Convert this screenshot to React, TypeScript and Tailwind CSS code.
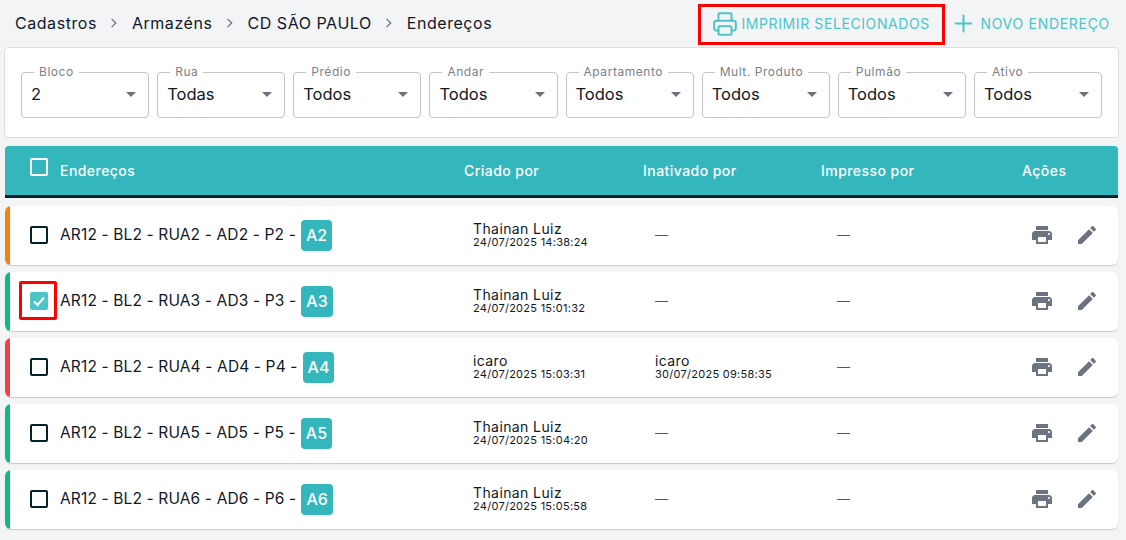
import { Plus, Printer } from "lucide-react";

const filters = [
  { label: "Bloco", value: "2" },
  { label: "Rua", value: "Todas" },
  { label: "Prédio", value: "Todos" },
  { label: "Andar", value: "Todos" },
  { label: "Apartamento", value: "Todos" },
  { label: "Mult. Produto", value: "Todos" },
  { label: "Pulmão", value: "Todos" },
  { label: "Ativo", value: "Todos" },
];

const rows = [
  { name: "AR12 - BL2 - RUA2 - AD2 - P2 -", tag: "A2", bar: "bg-[#f58207]", by: "Thainan Luiz", at: "24/07/2025 14:38:24" },
  { name: "AR12 - BL2 - RUA3 - AD3 - P3 -", tag: "A3", bar: "bg-[#10b981]", by: "Thainan Luiz", at: "24/07/2025 15:01:32", checked: true },
  { name: "AR12 - BL2 - RUA4 - AD4 - P4 -", tag: "A4", bar: "bg-[#ef4444]", by: "icaro", at: "24/07/2025 15:03:31", offBy: "icaro", offAt: "30/07/2025 09:58:35" },
  { name: "AR12 - BL2 - RUA5 - AD5 - P5 -", tag: "A5", bar: "bg-[#10b981]", by: "Thainan Luiz", at: "24/07/2025 15:04:20" },
  { name: "AR12 - BL2 - RUA6 - AD6 - P6 -", tag: "A6", bar: "bg-[#10b981]", by: "Thainan Luiz", at: "24/07/2025 15:05:58" },
];

const Crumb = () => (
  <svg width="24" height="24" viewBox="0 0 24 24" className="mx-[5.5px] fill-[#6b7280]">
    <path d="M10 7.4 9.1 8.3l3.7 3.7-3.7 3.7.9.9 4.6-4.6z" />
  </svg>
);

const Person = ({ name, at }: { name: string; at: string }) => (
  <div className="flex flex-col text-[#111827]">
    <span className="text-[14px] leading-[14px] tracking-[0.4px]">{name}</span>
    <span className="text-[11px] leading-[12px] tracking-[0.27px]">{at}</span>
  </div>
);

const Dash = () => <span className="-mt-[1px] block text-[13px] leading-[16px] text-[#4b5563]">—</span>;

export default function App() {
  return (
    <div className="h-[540px] w-[1126px] overflow-hidden bg-[#f3f4f6] font-['Inter',sans-serif] text-[#111827]">
      <div className="flex h-[47px] items-center pr-[16px] pl-[15px]">
        <nav className="flex items-center pb-[1px] text-[16px] tracking-[0.55px]">
          <span>Cadastros</span>
          <Crumb />
          <span>Armazéns</span>
          <Crumb />
          <span>CD SÃO PAULO</span>
          <Crumb />
          <span>Endereços</span>
        </nav>
        <div className="mt-[1px] ml-auto flex items-center gap-[5px] text-[14px] text-[#4cc4c8]">
          <button className="flex h-[41px] w-[247px] items-center gap-[3px] border-[3px] border-[#ff0000] pb-[1px] pl-[11px]">
            <Printer size={26} strokeWidth={1.8} />
            <span className="tracking-[0.6px]">IMPRIMIR SELECIONADOS</span>
          </button>
          <button className="flex h-[41px] items-center gap-[3px] pb-[1px]">
            <Plus size={27} strokeWidth={1.8} />
            <span className="tracking-[0.7px]">NOVO ENDEREÇO</span>
          </button>
        </div>
      </div>

      <section className="ml-[4px] flex h-[91px] w-[1115px] items-start gap-[8px] rounded-[4px] border border-[#dcdee2] bg-white pt-[24px] pl-[16px]">
        {filters.map((f) => (
          <div key={f.label} className="relative flex h-[46px] w-[128.14px] items-center rounded-[4px] border border-[#c4c4c4] pr-[5px] pb-[2px] pl-[9px]">
            <span className="absolute -top-[7px] left-[12px] bg-white px-[5px] text-[12px] leading-[12px] tracking-[0.55px] text-[#7b8089]">{f.label}</span>
            <span className="text-[16.5px]">{f.value}</span>
            <svg width="24" height="24" viewBox="0 0 24 24" className="ml-auto fill-[#6b7280]">
              <path d="M7 10l5 5 5-5z" />
            </svg>
          </div>
        ))}
      </section>

      <div className="mt-[8px] ml-[5px] flex h-[52px] w-[1113px] items-center rounded-t-[4px] border-b-[3px] border-[#03222e] bg-[#33b7bd] pb-[1px] text-[14px] font-medium tracking-[0.45px] text-white">
        <span className="-mt-[6px] ml-[25px] h-[18px] w-[18px] rounded-[2px] border-2 border-white" />
        <span className="ml-[12px] w-[404px]">Endereços</span>
        <span className="w-[179px]">Criado por</span>
        <span className="w-[178px]">Inativado por</span>
        <span className="w-[201px]">Impresso por</span>
        <span>Ações</span>
      </div>

      <div className="mt-[8px] ml-[5px] flex w-[1113px] flex-col gap-[7px]">
        {rows.map((r) => (
          <div key={r.tag} className="flex h-[59px] items-center overflow-hidden rounded-[6px] bg-white pb-[1px] shadow-[0_1px_1px_rgba(0,0,0,0.18)]">
            <div className={`-mb-[1px] h-[59px] w-[5px] shrink-0 ${r.bar}`} />
            <div className="relative ml-[20px] flex h-[18px] w-[18px] shrink-0 items-center justify-center">
              {r.checked ? (
                <div className="flex h-[18px] w-[18px] items-center justify-center rounded-[2px] bg-[#4cc4c8]">
                  <svg width="14" height="14" viewBox="0 0 14 14" fill="none" stroke="white" strokeWidth="2"><path d="M2 7.5 5.5 11 12 3.5" /></svg>
                </div>
              ) : (
                <div className="h-[18px] w-[18px] rounded-[2px] border-2 border-[#03222e]" />
              )}
            </div>
            <div className="ml-[12px] flex w-[413px] shrink-0 items-center gap-[5px]">
              <span className="text-[15.5px] tracking-[0.14px] whitespace-nowrap">{r.name}</span>
              <span className="flex h-[31px] items-center rounded-[4px] bg-[#33b7bd] px-[5px] text-[16px] font-medium text-white">{r.tag}</span>
            </div>
            <div className="w-[182px] shrink-0"><Person name={r.by} at={r.at} /></div>
            <div className="w-[182px] shrink-0">{r.offBy ? <Person name={r.offBy} at={r.offAt!} /> : <Dash />}</div>
            <div className="w-[193px] shrink-0"><Dash /></div>
            <div className="flex items-center gap-[21px]">
              <svg width="24" height="24" viewBox="0 0 24 24" className="fill-[#6b7280]">
                <path d="M19 8H5c-1.66 0-3 1.34-3 3v6h4v4h12v-4h4v-6c0-1.66-1.34-3-3-3zm-3 11H8v-5h8v5zm3-7c-.55 0-1-.45-1-1s.45-1 1-1 1 .45 1 1-.45 1-1 1zm-1-9H6v4h12V3z" />
              </svg>
              <svg width="24" height="24" viewBox="0 0 24 24" className="fill-[#6b7280]">
                <path d="M3 17.25V21h3.75L17.81 9.94l-3.75-3.75L3 17.25zM20.71 7.04c.39-.39.39-1.02 0-1.41l-2.34-2.34c-.39-.39-1.02-.39-1.41 0l-1.83 1.83 3.75 3.75 1.83-1.83z" />
              </svg>
            </div>
          </div>
        ))}
      </div>

      <div className="pointer-events-none absolute top-[281px] left-[19px] h-[39px] w-[38px] rounded-[2px] border-[3px] border-[#ff0000]" />
    </div>
  );
}
